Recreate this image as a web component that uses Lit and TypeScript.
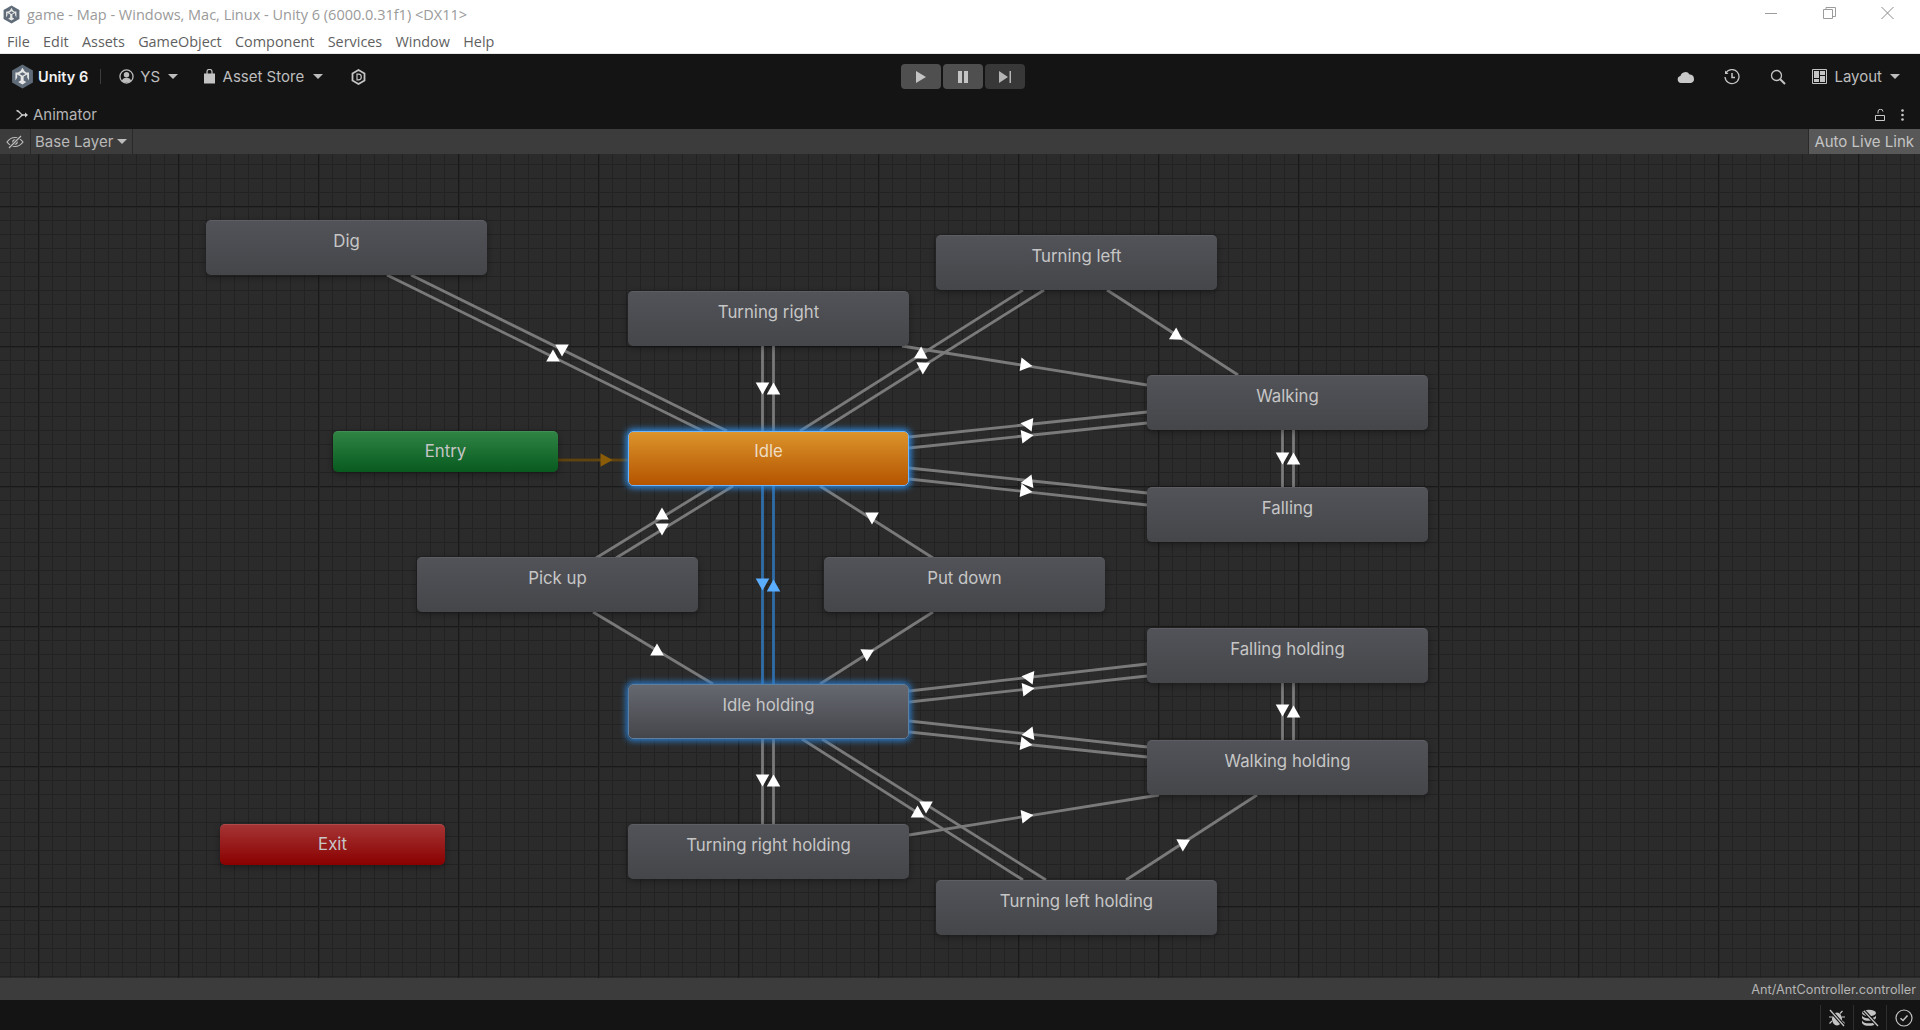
import { LitElement, html, css, svg } from "lit";
import { customElement } from "lit/decorators.js";

type Seg = [number, number, number, number];
type Arrow = [number, number, number];

const GREY_LINES: Seg[] = [
  [387, 275, 703, 431], [411, 275, 727, 431],
  [762.5, 346, 762.5, 431], [773.5, 346, 773.5, 431],
  [800, 431, 1023, 290], [820, 431, 1044, 290],
  [902, 346, 1147, 385],
  [1107, 290, 1238, 375],
  [909, 437, 1147, 412], [909, 448, 1147, 423],
  [909, 468, 1147, 493], [909, 479, 1147, 505],
  [1282.5, 430, 1282.5, 487], [1293.5, 430, 1293.5, 487],
  [713, 486, 596, 558], [733, 486, 616, 558],
  [820, 486, 933, 558],
  [593, 612, 713, 684],
  [933, 612, 820, 684],
  [909, 691, 1147, 664], [909, 702, 1147, 676],
  [909, 721, 1147, 747], [909, 732, 1147, 757],
  [1282.5, 683, 1282.5, 740], [1293.5, 683, 1293.5, 740],
  [762.5, 739, 762.5, 824], [773.5, 739, 773.5, 824],
  [802, 739, 1023, 880], [822, 739, 1046, 880],
  [909, 835, 1159, 795],
  [1257, 795, 1126, 880],
];
const BLUE_LINES: Seg[] = [[762.5, 486, 762.5, 684], [773.5, 486, 773.5, 684]];
const WHITE_ARROWS: Arrow[] = [
  [553, 356, -90], [562, 350, 90],
  [762.5, 388, 90], [773.5, 389, -90],
  [921, 353, -88], [923, 368, 92],
  [1026, 365, 8],
  [1176, 334, -88],
  [1027, 424, 187], [1027, 436, -7],
  [1027, 482, 172], [1026, 491, 8],
  [1282.5, 458, 90], [1293.5, 459, -90],
  [662, 514, -90], [662, 529, 90],
  [872, 518, 90],
  [657, 650, -90],
  [867, 655, 92],
  [1028, 677, 187], [1028, 689, -7],
  [1028, 734, 172], [1026, 744, 8],
  [1282.5, 710, 90], [1293.5, 712, -90],
  [762.5, 780, 90], [773.5, 781, -90],
  [917.5, 812, -90], [926, 807, 90],
  [1027, 816, -8],
  [1183, 845, 92],
];
const BLUE_ARROWS: Arrow[] = [[762.5, 584, 90], [773.5, 586, -90]];

const NODES: { label: string; x: number; y: number; cls: string }[] = [
  { label: "Dig", x: 206, y: 220, cls: "" },
  { label: "Turning left", x: 936, y: 235, cls: "" },
  { label: "Turning right", x: 628, y: 291, cls: "" },
  { label: "Walking", x: 1147, y: 375, cls: "" },
  { label: "Entry", x: 333, y: 431, cls: "entry" },
  { label: "Idle", x: 628, y: 431, cls: "idle" },
  { label: "Falling", x: 1147, y: 487, cls: "" },
  { label: "Pick up", x: 417, y: 557, cls: "" },
  { label: "Put down", x: 824, y: 557, cls: "" },
  { label: "Falling holding", x: 1147, y: 628, cls: "" },
  { label: "Idle holding", x: 628, y: 684, cls: "held" },
  { label: "Walking holding", x: 1147, y: 740, cls: "" },
  { label: "Exit", x: 220, y: 824, cls: "exit" },
  { label: "Turning right holding", x: 628, y: 824, cls: "" },
  { label: "Turning left holding", x: 936, y: 880, cls: "" },
];

const tri = ([x, y, a]: Arrow, fill: string) => {
  const r = (a * Math.PI) / 180;
  const pt = (f: number, s: number) =>
    `${(x + f * Math.cos(r) - s * Math.sin(r)).toFixed(1)},${(y + f * Math.sin(r) + s * Math.cos(r)).toFixed(1)}`;
  return svg`<polygon points="${pt(6.5, 0)} ${pt(-5.5, 6.8)} ${pt(-5.5, -6.8)}" fill="${fill}"/>`;
};

const unityLogo = (size: number) => html`<svg width="${size}" height="${size}" viewBox="0 0 24 24">
  <path d="M12 .5 22 6.200v11.600L12 23.500 2 17.800V6.200Z" fill="#5f6b78"/>
  <path d="M12 3.600 10 6.800 7.600 8.200 5.200 8.200 5.200 15.800l1.700-2.900V10l3.400 2v3.900l-2.500 1.400L12 19.700l3.600-2.400-2.500-1.400V12l3.400-2v2.900l1.700 2.900V8.200l-2.700 0L13.900 6.800Zm0 4.400 3 1.700-3 1.600-3-1.600Z" fill="#e6e6e6"/>
</svg>`;

@customElement("app-root")
export class AppRoot extends LitElement {
  static styles = css`
    :host { display: block; width: 1920px; height: 1030px; overflow: hidden; font-family: Inter, "Liberation Sans", sans-serif; background: #141414; }
    .win { height: 53px; background: #fff; border-bottom: 1px solid #e8e8e8; position: relative; font-family: "Open Sans", "Noto Sans", sans-serif; }
    .title { height: 28px; display: flex; align-items: center; gap: 6px; padding-left: 2px; font-size: 14.5px; color: #9a9a9a; }
    .menu { display: flex; gap: 13.3px; padding-left: 7px; font-size: 14.4px; color: #5f5f5f; line-height: 27px; }
    .winctl { position: absolute; top: 6px; right: 26px; display: flex; gap: 45px; }
    .winctl svg { display: block; }

    .bar { height: 46px; box-sizing: border-box; display: grid; grid-template-columns: 1fr auto 1fr; align-items: center; color: #bdbdbd; font-size: 15px; padding-bottom: 1px; }
    .left, .right { display: flex; align-items: center; }
    .left { padding-left: 10px; }
    .right { justify-content: flex-end; padding-right: 20px; }
    .brand { font-weight: 600; color: #f2f2f2; margin-left: 3px; font-size: 14.5px; }
    .sep { width: 1px; height: 15px; background: #3c3c3c; margin: 0 18px 0 12px; }
    .caret { width: 0; height: 0; border-left: 5px solid transparent; border-right: 5px solid transparent; border-top: 5px solid #bdbdbd; margin-left: 8px; }
    .ml6 { margin-left: 6px; }
    .ml7 { margin-left: 7px; }
    .c9 { margin-left: 9px; }
    .g1 { margin-left: 24.5px; }
    .g2 { margin-left: 27.5px; }
    .g3 { margin-left: 29px; }
    .g4 { margin-left: 30px; }
    .g5 { margin-left: 26px; }
    .play { display: flex; gap: 2px; margin-left: 6px; }
    .pbtn { width: 40px; height: 25px; border-radius: 4px; display: flex; align-items: center; justify-content: center; background: #4f4f4f; }
    .pbtn.off { background: #383838; }
    .lab { margin-left: 7px; }

    .tab { height: 29px; display: flex; align-items: center; padding: 0 16px 0 16px; color: #b4b4b4; font-size: 15px; gap: 5px; }
    .tab .sp { flex: 1; }
    .tab .lock { margin-right: 11px; }

    .tools { height: 25px; background: #3c3c3c; display: flex; align-items: stretch; color: #b9b9b9; font-size: 15px; }
    .tools .eye { width: 30px; border-right: 1px solid #2a2a2a; display: flex; align-items: center; justify-content: center; }
    .tools .layer { width: 102px; border-right: 1px solid #2a2a2a; display: flex; align-items: center; padding-left: 4px; box-sizing: border-box; }
    .tools .layer .caret { margin-left: 4px; }
    .tools .sp { flex: 1; }
    .tools .live { width: 112px; background: #585858; border-left: 1px solid #2a2a2a; box-sizing: border-box; display: flex; align-items: center; justify-content: flex-end; padding-right: 6px; color: #c4c4c4; }

    .canvas { position: relative; height: 824px; overflow: hidden; background-color: #2b2b2b;
      background-image:
        linear-gradient(90deg, #1a1a1a 1px, #252525 1px 2px, transparent 2px),
        linear-gradient(#1a1a1a 1px, #252525 1px 2px, transparent 2px),
        linear-gradient(90deg, #222 1px, transparent 1px),
        linear-gradient(#222 1px, transparent 1px);
      background-size: 140px 140px, 140px 140px, 14px 14px, 14px 14px;
      background-position: 38px 0, 0 52px, 10px 0, 0 10px;
    }
    .edges { position: absolute; left: 0; top: 0; }
    .node { position: absolute; width: 281px; height: 55px; box-sizing: border-box; border-radius: 5px; text-align: center; font-size: 16.8px; line-height: 20px; padding-top: 10px; color: #c6c6c6;
      background: linear-gradient(#525358, #45464a); border-top: 1px solid #5d5e63; box-shadow: 0 2px 6px rgba(0,0,0,.35); }
    .node.entry, .node.exit { width: 225px; height: 41px; padding-top: 9px; }
    .node.entry { background: linear-gradient(#2f8444, #085a1e); border-top-color: #418f55; }
    .node.exit { background: linear-gradient(#a53434, #8a0000); border-top-color: #b04a4a; }
    .node.idle { background: linear-gradient(#dc942c, #b45400); color: #efdcc4; border: 1px solid #6db6ff; padding-top: 9px; box-shadow: 0 0 6px 2px #2f8de6; }
    .node.held { background: linear-gradient(#666870, #45464b); border: 1px solid #5f7f9f; box-shadow: 0 0 6px 2px #2b7ccc; }

    .path { height: 22px; background: #3c3c3c; display: flex; align-items: center; justify-content: flex-end; padding-right: 4px; color: #b4b4b4; font-size: 12.75px; }
    .status { height: 30px; display: flex; justify-content: flex-end; }
    .cell { width: 32px; margin: 5px 0 0; border-left: 1px solid #2e2e2e; display: flex; align-items: center; justify-content: center; }
    .cell:last-child { width: 33px; }
  `;

  render() {
    return html`
      <div class="win">
        <div class="title">${unityLogo(19)}<span>game - Map - Windows, Mac, Linux - Unity 6 (6000.0.31f1) &lt;DX11&gt;</span></div>
        <div class="menu"><span>File</span><span>Edit</span><span>Assets</span><span>GameObject</span><span>Component</span><span>Services</span><span>Window</span><span>Help</span></div>
        <div class="winctl">
          <svg width="13" height="14" viewBox="0 0 13 14"><path d="M0 7.500h12" stroke="#9c9c9c"/></svg>
          <svg width="13" height="14" viewBox="0 0 13 14"><path d="M.5 3.500h9v9h-9zM3 3.500V1.500h9.500v9h-3" fill="none" stroke="#9c9c9c"/></svg>
          <svg width="13" height="14" viewBox="0 0 13 14"><path d="M.5 1 12.500 13M12.500 1 .5 13" stroke="#8a8a8a"/></svg>
        </div>
      </div>

      <div class="bar">
        <div class="left">
          ${unityLogo(25)}
          <span class="brand">Unity 6</span><span class="sep"></span>
          <svg width="15" height="15" viewBox="0 0 16 16"><circle cx="8" cy="8" r="7" fill="none" stroke="#bdbdbd" stroke-width="1.400"/><circle cx="8" cy="6.200" r="2.900" fill="#bdbdbd"/><path d="M3 12.500c1-2.500 3-3.200 5-3.200s4 .7 5 3.200c-1.300 1.300-3 2-5 2s-3.700-.7-5-2Z" fill="#bdbdbd"/></svg>
          <span class="ml6">YS</span><span class="caret"></span>
          <svg class="g1" width="13" height="15" viewBox="0 0 13 15"><path d="M1 4.500h11v10H1Z" fill="#c4c4c4"/><path d="M4 5V2.500a2.500 2 0 0 1 5 0V5" fill="none" stroke="#c4c4c4" stroke-width="1.200"/></svg>
          <span class="ml7">Asset Store</span><span class="caret c9"></span>
          <svg class="g2" width="15" height="16" viewBox="0 0 15 16"><path d="M7.500 1 13.500 4.400v7.200L7.500 15 1.500 11.600V4.400Z" fill="none" stroke="#c4c4c4" stroke-width="1.800"/><path d="M6 5.200h1.500a2.800 2.800 0 0 1 0 5.600H6Z" fill="none" stroke="#c4c4c4" stroke-width="1.200"/></svg>
        </div>
        <div class="play">
          <div class="pbtn"><svg width="12" height="14" viewBox="0 0 12 14"><path d="M1 1 11 7 1 13Z" fill="#c4c4c4"/></svg></div>
          <div class="pbtn"><svg width="12" height="12" viewBox="0 0 12 12"><path d="M1 0h4v12H1zM7 0h4v12H7z" fill="#c4c4c4"/></svg></div>
          <div class="pbtn off"><svg width="13" height="12" viewBox="0 0 13 12"><path d="M0 0 9 6 0 12ZM10.500 0h1.500v12h-1.500z" fill="#b4b4b4"/></svg></div>
        </div>
        <div class="right">
          <svg width="18" height="12" viewBox="0 0 18 12"><path d="M4 12a3.500 3.500 0 0 1-.6-6.900A5 5 0 0 1 12.600 3.600 4.300 4.300 0 0 1 14 12Z" fill="#c8c8c8"/></svg>
          <svg class="g3" width="16" height="16" viewBox="0 0 16 16"><path d="M1.800 4.300A7 7 0 1 1 1 8" fill="none" stroke="#c4c4c4" stroke-width="1.300"/><path d="M1 1.500v3.500h3.500Z" fill="#c4c4c4"/><path d="M8 4v4.500h3" fill="none" stroke="#c4c4c4" stroke-width="1.500"/></svg>
          <svg class="g4" width="16" height="16" viewBox="0 0 16 16"><circle cx="6.500" cy="6.500" r="5" fill="none" stroke="#c4c4c4" stroke-width="1.300"/><path d="M10.200 10.200 15 15" stroke="#c4c4c4" stroke-width="2"/></svg>
          <svg class="g5" width="15" height="15" viewBox="0 0 15 15"><path d="M.5.500h14v14H.5z" fill="none" stroke="#c4c4c4"/><path d="M2 2h5v7H2zM8 2h5v4H8zM2 10h5v3H2zM8 7h5v6H8z" fill="#c4c4c4"/></svg>
          <span class="lab">Layout</span><span class="caret"></span>
        </div>
      </div>

      <div class="tab">
        <svg width="12" height="12" viewBox="0 0 12 12"><path d="M.5 1.500C4 2 4.500 6 7 6M.5 10.500C4 10 4.500 6 7 6H11" fill="none" stroke="#d0d0d0" stroke-width="1.300"/><path d="M9 3.500 12 6 9 8.500Z" fill="#d0d0d0"/></svg>
        <span>Animator</span><span class="sp"></span>
        <svg class="lock" width="10" height="12" viewBox="0 0 10 12"><path d="M.5 6.500h9v5h-9zM3 4.500V3a2.500 2.500 0 0 1 5-.5" fill="none" stroke="#c8c8c8"/></svg>
        <svg width="3" height="12" viewBox="0 0 3 12"><circle cx="1.500" cy="1.500" r="1.300" fill="#c8c8c8"/><circle cx="1.500" cy="6" r="1.300" fill="#c8c8c8"/><circle cx="1.500" cy="10.500" r="1.300" fill="#c8c8c8"/></svg>
      </div>

      <div class="tools">
        <div class="eye"><svg width="18" height="14" viewBox="0 0 18 14"><path d="M1 7c2.500-3.500 5-4.500 8-4.500S14.500 3.500 17 7c-2.500 3.500-5 4.500-8 4.500S3.500 10.500 1 7Z" fill="none" stroke="#bdbdbd" stroke-width="1.200"/><circle cx="9" cy="7" r="2.800" fill="#bdbdbd"/><path d="M3 13 15 1" stroke="#3c3c3c" stroke-width="3"/><path d="M3 13 15 1" stroke="#bdbdbd" stroke-width="1.200"/></svg></div>
        <div class="layer"><span>Base Layer</span><span class="caret"></span></div>
        <span class="sp"></span>
        <div class="live">Auto Live Link</div>
      </div>

      <div class="canvas">
        <svg class="edges" width="1920" height="824" viewBox="0 154 1920 824">
          ${GREY_LINES.map(([a, b, c, d]) => svg`<line x1="${a}" y1="${b}" x2="${c}" y2="${d}" stroke="#7a7a7a" stroke-width="2.800"/>`)}
          ${BLUE_LINES.map(([a, b, c, d]) => svg`<line x1="${a}" y1="${b}" x2="${c}" y2="${d}" stroke="#2f6da8" stroke-width="2.800"/>`)}
          <line x1="558" y1="460" x2="628" y2="460" stroke="#5f4310" stroke-width="2.800"/>
          ${tri([606, 460, 0], "#8a5c08")}
          ${WHITE_ARROWS.map((a) => tri(a, "#ffffff"))}
          ${BLUE_ARROWS.map((a) => tri(a, "#5badff"))}
        </svg>
        ${NODES.map((n) => html`<div class="node ${n.cls}" style="left:${n.x}px;top:${n.y - 154}px">${n.label}</div>`)}
      </div>

      <div class="path">Ant/AntController.controller</div>
      <div class="status">
        <div class="cell"><svg width="18" height="18" viewBox="0 0 18 18"><path d="M6 4.500 3.500 2M12 4.500 14.500 2M4 8H1M14 8h3M4 12 1.500 14.500M14 12l2.500 2.500" stroke="#c4c4c4" stroke-width="1.200"/><ellipse cx="9" cy="10" rx="5" ry="6.500" fill="#c4c4c4"/><path d="M2 1 16 17" stroke="#141414" stroke-width="3.500"/><path d="M2 1 16 17" stroke="#c4c4c4" stroke-width="1.300"/></svg></div>
        <div class="cell"><svg width="18" height="18" viewBox="0 0 18 18"><ellipse cx="8" cy="4" rx="7" ry="3.200" fill="#c4c4c4"/><path d="M1 6.500c1 2 3.500 2.800 7 2.800s6-.8 7-2.800v2.500c-1 2-3.500 2.800-7 2.800S2 11 1 9ZM1 11.500c1 2 3.500 2.800 7 2.800s6-.8 7-2.800V14c-1 2-3.500 2.800-7 2.800S2 16 1 14Z" fill="#c4c4c4"/><path d="M3 2 17 17" stroke="#141414" stroke-width="3.500"/><path d="M3 2 17 17" stroke="#c4c4c4" stroke-width="1.300"/></svg></div>
        <div class="cell"><svg width="18" height="18" viewBox="0 0 18 18"><circle cx="9" cy="9" r="8" fill="none" stroke="#c4c4c4" stroke-width="1.200"/><path d="M5.500 9.200 8 11.500 12.500 6.500" fill="none" stroke="#c4c4c4" stroke-width="1.500"/></svg></div>
      </div>
    `;
  }
}
